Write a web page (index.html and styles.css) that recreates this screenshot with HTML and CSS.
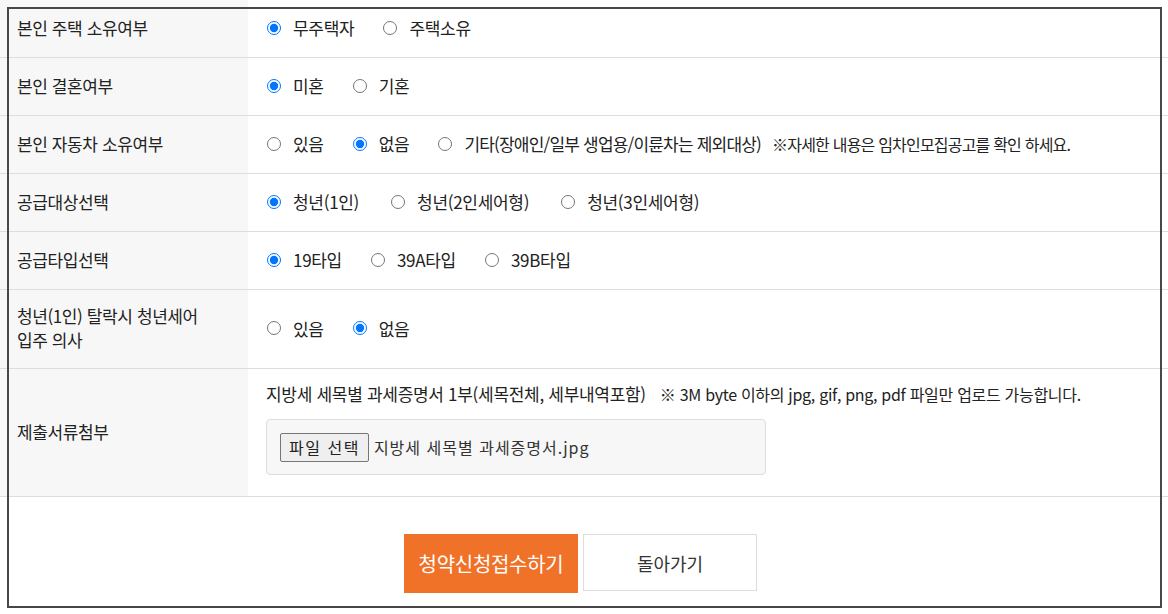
FILE: index.html
```html
<!DOCTYPE html>
<html lang="ko">
<head>
<meta charset="utf-8">
<title>청약신청</title>
<link rel="stylesheet" href="styles.css">
</head>
<body>
<div class="page">
  <div class="form">
    <div class="row h58">
      <div class="th">본인 주택 소유여부</div>
      <div class="td">
        <label class="opt"><input type="radio" name="house" checked><span>무주택자</span></label>
        <label class="opt"><input type="radio" name="house"><span>주택소유</span></label>
      </div>
    </div>
    <div class="row h58">
      <div class="th">본인 결혼여부</div>
      <div class="td">
        <label class="opt"><input type="radio" name="marry" checked><span>미혼</span></label>
        <label class="opt"><input type="radio" name="marry"><span>기혼</span></label>
      </div>
    </div>
    <div class="row h58">
      <div class="th">본인 자동차 소유여부</div>
      <div class="td">
        <label class="opt"><input type="radio" name="car"><span>있음</span></label>
        <label class="opt"><input type="radio" name="car" checked><span>없음</span></label>
        <label class="opt tight"><input type="radio" name="car"><span>기타(장애인/일부 생업용/이륜차는 제외대상)</span></label>
        <span class="note">※자세한 내용은 임차인모집공고를 확인 하세요.</span>
      </div>
    </div>
    <div class="row h58">
      <div class="th">공급대상선택</div>
      <div class="td">
        <label class="opt wide"><input type="radio" name="target" checked><span>청년(1인)</span></label>
        <label class="opt wide"><input type="radio" name="target"><span>청년(2인세어형)</span></label>
        <label class="opt wide"><input type="radio" name="target"><span>청년(3인세어형)</span></label>
      </div>
    </div>
    <div class="row h58">
      <div class="th">공급타입선택</div>
      <div class="td">
        <label class="opt"><input type="radio" name="type" checked><span>19타입</span></label>
        <label class="opt"><input type="radio" name="type"><span>39A타입</span></label>
        <label class="opt"><input type="radio" name="type"><span>39B타입</span></label>
      </div>
    </div>
    <div class="row h79">
      <div class="th two"><span class="lbl">청년(1인) 탈락시 청년세어<br>입주 의사</span></div>
      <div class="td">
        <label class="opt"><input type="radio" name="share"><span>있음</span></label>
        <label class="opt"><input type="radio" name="share" checked><span>없음</span></label>
      </div>
    </div>
    <div class="row h128">
      <div class="th">제출서류첨부</div>
      <div class="td col">
        <div class="doc">지방세 세목별 과세증명서 1부(세목전체, 세부내역포함)<span class="doc-note">※ 3M byte 이하의 jpg, gif, png, pdf 파일만 업로드 가능합니다.</span></div>
        <div class="filebox">
          <button type="button" class="filebtn">파일 선택</button>
          <span class="filename">지방세 세목별 과세증명서.jpg</span>
        </div>
      </div>
    </div>
    <div class="actions">
      <button type="button" class="btn primary">청약신청접수하기</button>
      <button type="button" class="btn secondary">돌아가기</button>
    </div>
  </div>
  <div class="frame"></div>
</div>
</body>
</html>
```
FILE: styles.css
```css
* { box-sizing: border-box; }
html, body {
  margin: 0;
  padding: 0;
  background: #ffffff;
}
body {
  font-family: "Noto Sans CJK KR", "Noto Sans", sans-serif;
  color: #222;
  font-size: 17px;
  width: 1168px;
  height: 614px;
  overflow: hidden;
}
.page {
  position: relative;
  width: 1168px;
  height: 614px;
}
.form {
  display: flex;
  flex-direction: column;
}
.row {
  display: grid;
  grid-template-columns: 248px 1fr;
  border-bottom: 1px solid #dddddd;
}
.h58 { height: 58px; }
.h79 { height: 79px; }
.h128 { height: 128px; }
.th {
  background: #f7f7f7;
  display: flex;
  align-items: center;
  padding-left: 17px;
  padding-bottom: 2px;
  font-size: 17px;
  letter-spacing: -0.4px;
  color: #222;
}
.th.two .lbl {
  display: block;
  line-height: 24px;
}
.td {
  display: flex;
  align-items: center;
  padding-left: 18px;
  padding-bottom: 2px;
  font-size: 17px;
  letter-spacing: -0.3px;
}
.td.col {
  flex-direction: column;
  align-items: flex-start;
  justify-content: flex-start;
  padding-top: 14px;
}
.opt {
  display: inline-flex;
  align-items: center;
  margin-right: 28px;
  white-space: nowrap;
}
.opt.wide { margin-right: 31px; }
.opt.tight { margin-right: 11px; letter-spacing: -0.8px; }
.opt input {
  margin: 0 12px 0 1px;
  width: 14px;
  height: 14px;
}
.note { white-space: nowrap; font-size: 16px; letter-spacing: -0.8px; }
.doc {
  line-height: 22px;
  white-space: nowrap;
  font-size: 17px;
  letter-spacing: -0.3px;
}
.doc-note {
  margin-left: 14px;
  font-size: 16px;
  letter-spacing: -0.3px;
}
.filebox {
  margin-top: 14px;
  width: 500px;
  height: 56px;
  background: #f7f7f7;
  border: 1px solid #dddddd;
  border-radius: 4px;
  display: flex;
  align-items: center;
  padding-left: 13px;
}
.filebtn {
  font-family: "Noto Sans CJK KR", sans-serif;
  font-size: 16px;
  letter-spacing: 1.5px;
  color: #222;
  height: 29px;
  padding: 0 8px;
  background: #efefef;
  border: 1px solid #767676;
  border-radius: 2px;
}
.filename {
  margin-left: 5px;
  color: #333;
  font-size: 16px;
  letter-spacing: 1px;
}
.actions {
  display: flex;
  justify-content: center;
  align-items: flex-start;
  gap: 5px;
  padding-top: 37px;
  padding-right: 7px;
}
.btn {
  font-family: "Noto Sans CJK KR", sans-serif;
  width: 174px;
  cursor: pointer;
}
.primary {
  height: 59px;
  background: #f07128;
  color: #ffffff;
  border: 0;
  font-size: 20px;
  letter-spacing: -0.3px;
}
.secondary {
  height: 57px;
  background: #ffffff;
  color: #333;
  border: 1px solid #dddddd;
  font-size: 18px;
}
.frame {
  position: absolute;
  left: 7px;
  top: 7px;
  width: 1155px;
  height: 601px;
  border: 2px solid #474747;
  pointer-events: none;
}
```
